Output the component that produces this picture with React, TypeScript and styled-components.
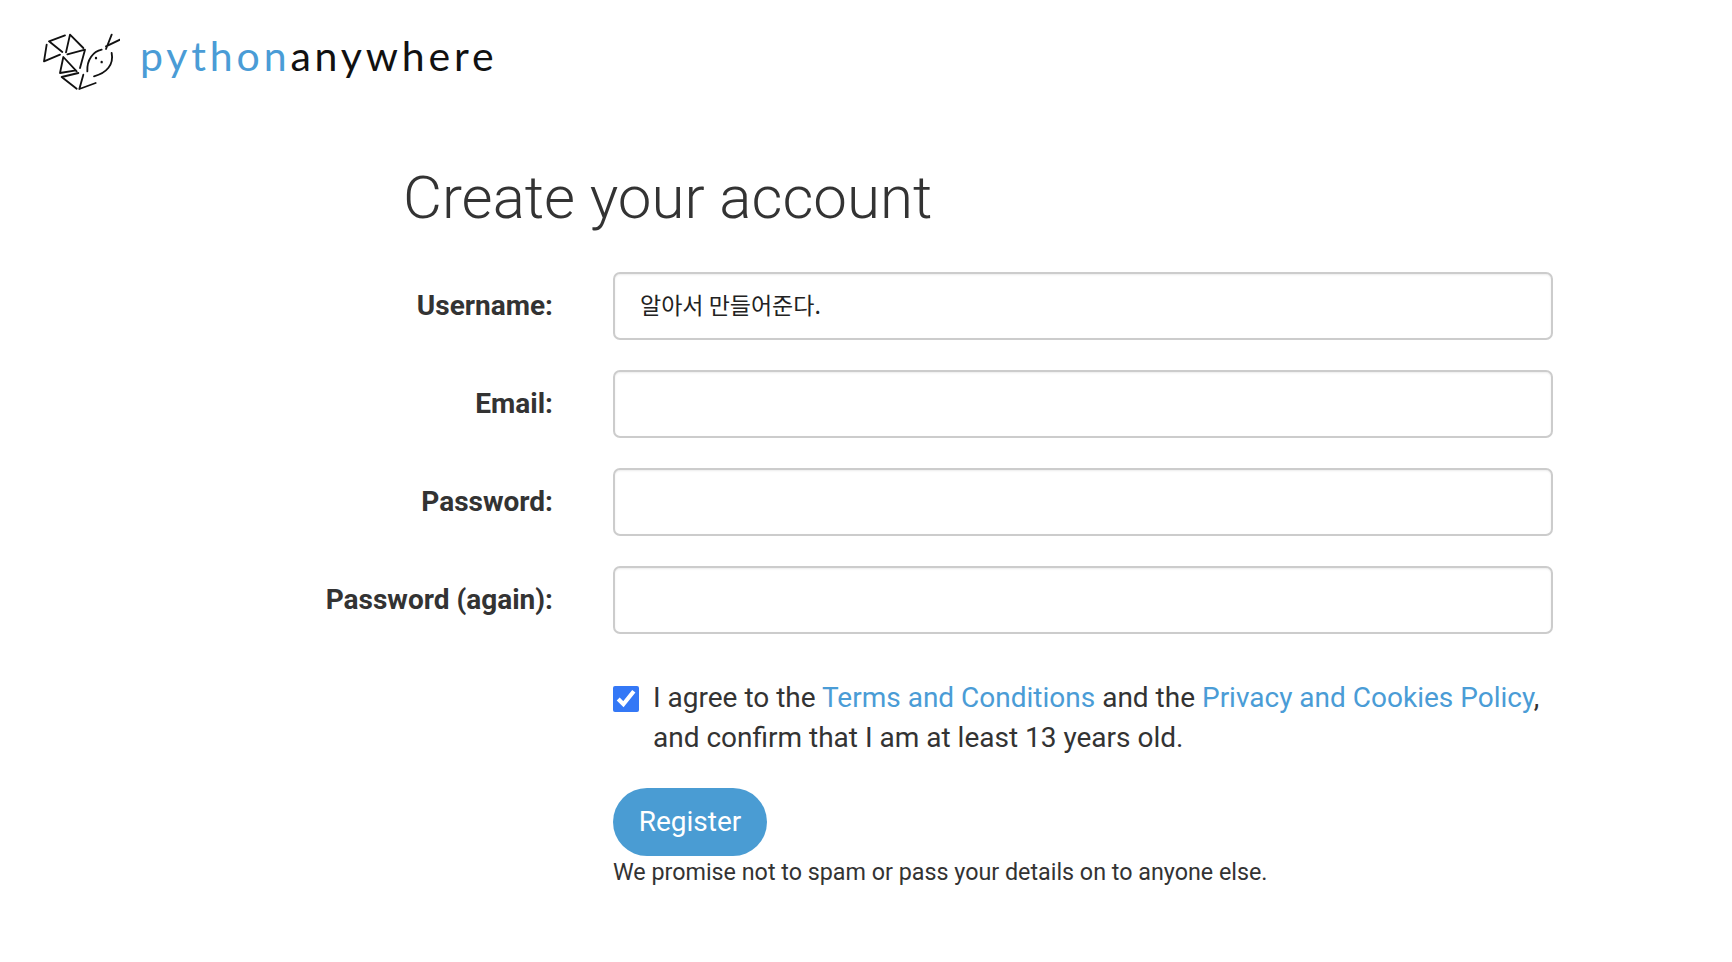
import React from "react";
import styled, { createGlobalStyle } from "styled-components";

const Global = createGlobalStyle`
  html, body { margin: 0; padding: 0; background: #fff; }
  body { font-family: Roboto, "Liberation Sans", sans-serif; color: #333; }
`;

const Page = styled.div`
  width: 1732px;
  height: 962px;
  overflow: hidden;
`;

const Header = styled.header`
  display: flex;
  align-items: flex-start;
  gap: 20px;
  padding: 33px 0 0 42px;
  height: 67px;
`;

const Wordmark = styled.div`
  font-family: Lato, "Noto Sans", sans-serif;
  font-weight: 400;
  font-size: 41px;
  line-height: 46px;
  letter-spacing: 3.85px;
  color: #111;
`;

const WordmarkAccent = styled.span`
  color: #4a9cd6;
`;

const Heading = styled.h1`
  margin: 62px 0 0 403px;
  font-weight: 300;
  font-size: 60px;
  line-height: 72px;
  color: #333;
`;

const Form = styled.form`
  display: grid;
  grid-template-columns: 553px 940px;
  column-gap: 60px;
  row-gap: 30px;
  margin-top: 38px;
  align-items: center;
`;

const Label = styled.label`
  text-align: right;
  font-weight: 700;
  font-size: 28px;
  color: #333;
  padding-bottom: 2px;
`;

const Input = styled.input`
  box-sizing: border-box;
  width: 100%;
  height: 68px;
  padding: 0 25px 4px;
  border: 2px solid #ccc;
  border-radius: 7px;
  box-shadow: inset 0 1px 2px rgba(0, 0, 0, 0.08);
  background: #fff;
  color: #222;
  outline: none;
  font-family: "Noto Sans CJK KR", Roboto, sans-serif;
  font-size: 23px;
`;

const Agreement = styled.div`
  grid-column: 2;
  display: flex;
  align-items: flex-start;
  gap: 14px;
  font-size: 28px;
  line-height: 40px;
  margin-top: 14px;
`;

const Check = styled.input`
  flex: none;
  width: 26px;
  height: 26px;
  margin: 8px 0 0;
  accent-color: #3478f6;
`;

const TermsLink = styled.a`
  color: #4a9cd6;
  text-decoration: none;
`;

const Submit = styled.div`
  grid-column: 2;
`;

const Button = styled.button`
  display: block;
  width: 154px;
  height: 68px;
  border: none;
  border-radius: 34px;
  background: #4a9cd3;
  color: #fff;
  font-family: Roboto, sans-serif;
  font-weight: 400;
  font-size: 28px;
  padding: 0 0 2px;
`;

const Promise = styled.p`
  margin: 1px 0 0;
  font-size: 23.3px;
  line-height: 30px;
  color: #333;
`;

const Logo = () => (
  <svg width="78" height="60" viewBox="36 40 234 180" fill="none" stroke="#111" strokeWidth="5.5" strokeLinecap="round" strokeLinejoin="round">
    <path d="M105 47 57 65 97 97" />
    <path d="M50 75 42 125 90 105" />
    <path d="M108 98 120 45 160 85" />
    <path d="M112 104 165 90 150 145" />
    <path d="M140 155 100 112 90 160 138 152" />
    <path d="M145 160 95 172 140 207" />
    <path d="M160 165 148 208 197 190" />
    <path d="M215 90C190 95 170 120 172 155" />
    <path d="M245 100C252 135 230 160 192 170" />
    <path d="M245 45 228 88M228 80 270 60" />
    <path d="M198 115v.5M215 127v.5" strokeWidth="7" />
  </svg>
);

export default function App() {
  return (
    <Page>
      <Global />
      <Header>
        <Logo />
        <Wordmark>
          <WordmarkAccent>python</WordmarkAccent>anywhere
        </Wordmark>
      </Header>
      <Heading>Create your account</Heading>
      <Form>
        <Label>Username:</Label>
        <Input readOnly value="알아서 만들어준다." />
        <Label>Email:</Label>
        <Input readOnly />
        <Label>Password:</Label>
        <Input readOnly type="password" />
        <Label>Password (again):</Label>
        <Input readOnly type="password" />
        <Agreement>
          <Check type="checkbox" defaultChecked />
          <span>
            I agree to the <TermsLink href="#">Terms and Conditions</TermsLink> and the{" "}
            <TermsLink href="#">Privacy and Cookies Policy</TermsLink>, and confirm that I am at least 13 years old.
          </span>
        </Agreement>
        <Submit>
          <Button type="button">Register</Button>
          <Promise>We promise not to spam or pass your details on to anyone else.</Promise>
        </Submit>
      </Form>
    </Page>
  );
}
